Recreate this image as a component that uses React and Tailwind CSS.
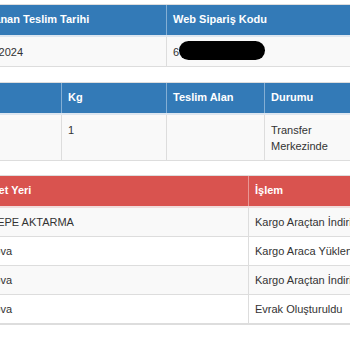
import React from "react";

export default function App() {
  const th = "pt-[6px] pb-[8px] px-[6px] shrink-0";
  const td = "px-[6px] shrink-0";
  return (
    <div className="w-[350px] h-[350px] overflow-hidden bg-white font-['Liberation_Sans',Arial,sans-serif] text-[11px] leading-[16px] text-[#333]">
      <div className="ml-[-39px] w-[543px] pt-[4px]">
        {/* Table 1 */}
        <div className="border border-[#ddd] mb-[15px]">
          <div className="flex bg-[#337ab7] text-white font-bold border-b-2 border-[#dde6f0]">
            <div className={`${th} w-[205px] border-r border-white/40`}>Planlanan Teslim Tarihi</div>
            <div className={`${th} flex-1`}>Web Sipariş Kodu</div>
          </div>
          <div className="flex bg-[#f9f9f9]">
            <div className={`${td} pt-[7px] pb-[6px] w-[205px] border-r border-[#ddd]`}>16.07.2024</div>
            <div className={`${td} pt-[7px] pb-[6px] flex-1 relative`}>
              6
              <span className="absolute left-[12px] top-[4px] w-[86px] h-[19px] rounded-full bg-black"></span>
            </div>
          </div>
        </div>

        {/* Table 2 */}
        <div className="border border-[#ddd] mb-[14px]">
          <div className="flex bg-[#337ab7] text-white font-bold border-b-2 border-[#dde6f0]">
            <div className={`${th} w-[100px] border-r border-white/40`}>Adet</div>
            <div className={`${th} w-[105px] border-r border-white/40`}>Kg</div>
            <div className={`${th} w-[98px] border-r border-white/40`}>Teslim Alan</div>
            <div className={`${th} flex-1`}>Durumu</div>
          </div>
          <div className="flex bg-[#f9f9f9]">
            <div className={`${td} pt-[7px] pb-[6px] w-[100px] border-r border-[#ddd]`}>&nbsp;</div>
            <div className={`${td} pt-[7px] pb-[6px] w-[105px] border-r border-[#ddd]`}>1</div>
            <div className={`${td} pt-[7px] pb-[6px] w-[98px] border-r border-[#ddd]`}></div>
            <div className={`${td} pt-[7px] pb-[6px] w-[90px]`}>Transfer Merkezinde</div>
          </div>
        </div>

        {/* Table 3 */}
        <div className="border border-[#ddd]">
          <div className="flex bg-[#d9534f] text-white font-bold border-b-2 border-[#f0dcdc]">
            <div className={`${th} w-[287px] border-r border-white/40`}>Hareket Yeri</div>
            <div className={`${th} flex-1 whitespace-nowrap`}>İşlem</div>
          </div>
          {[
            ["KARTEPE AKTARMA", "Kargo Araçtan İndirildi", true],
            ["Çayırova", "Kargo Araca Yüklendi", false],
            ["Çayırova", "Kargo Araçtan İndirildi", true],
            ["Çayırova", "Evrak Oluşturuldu", false],
          ].map(([a, b, g], i) => (
            <div key={i} className={`flex border-b border-[#ddd] ${g ? "bg-[#f9f9f9]" : "bg-white"}`}>
              <div className={`${td} py-[6px] w-[287px] border-r border-[#ddd] whitespace-nowrap`}>{a}</div>
              <div className={`${td} py-[6px] flex-1 whitespace-nowrap`}>{b}</div>
            </div>
          ))}
        </div>
      </div>
    </div>
  );
}
